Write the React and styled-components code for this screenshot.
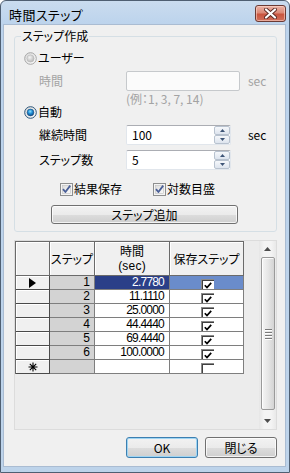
import React from "react";
import styled, { createGlobalStyle } from "styled-components";

const Global = createGlobalStyle`
  html, body { margin: 0; padding: 0; background: #ffffff; }
  body {
    font-family: "Noto Sans CJK JP", "Noto Sans", sans-serif;
    font-size: 12px;
    color: #000;
    font-feature-settings: "palt";
  }
  * { box-sizing: border-box; }
`;

const Window = styled.div`
  width: 290px;
  height: 473px;
  border: 1px solid #4f5f72;
  border-radius: 6px 6px 0 0;
  background: linear-gradient(#cadcef 0px, #bcd3ec 24px, #bdd3ea 100%);
  display: flex;
  flex-direction: column;
  padding: 0 4px 6px 3px;
  overflow: hidden;
`;

const TitleBar = styled.div`
  height: 24px;
  display: flex;
  align-items: flex-start;
  padding-left: 5px;
  margin-right: -1px;
`;

const Title = styled.div`
  font-size: 13px;
  line-height: 13px;
  margin-top: 7px;
  letter-spacing: 0.4px;
`;

const CloseBtn = styled.div`
  margin-left: auto;
  margin-top: 4px;
  width: 31px;
  height: 17px;
  border: 1px solid #6b3a34;
  border-radius: 3px;
  background: linear-gradient(#eab2a5 0%, #dc8a78 45%, #c9553f 55%, #d0705c 100%);
  box-shadow: inset 0 0 0 1px rgba(255, 220, 210, 0.55);
  display: flex;
  align-items: center;
  justify-content: center;
`;

const Client = styled.div`
  flex: 1;
  background: #f0f0f0;
  box-shadow: 0 0 0 1px #aabcd2;
  display: flex;
  flex-direction: column;
  padding: 5px 8px 0 10px;
`;

const Group = styled.fieldset`
  margin: 0;
  padding: 0 0 7px 0;
  border: 1px solid #d5dfe5;
  border-radius: 3px;
  min-width: 0;
  display: flex;
  flex-direction: column;
`;

const Legend = styled.legend`
  margin-left: 6px;
  padding: 0 1px;
  font-size: 12px;
  line-height: 12px;
`;

const Row = styled.div`
  display: flex;
  align-items: center;
  height: ${(p) => p.$h}px;
  margin-top: ${(p) => p.$mt}px;
  padding-left: ${(p) => p.$indent || 0}px;
  gap: ${(p) => p.$gap || 0}px;
`;

const FieldRow = styled.div`
  display: grid;
  grid-template-columns: 87px 122px auto;
  align-items: center;
  height: ${(p) => p.$h}px;
  margin-top: ${(p) => p.$mt}px;
  padding-left: 24px;
`;

const Label = styled.span`
  font-size: 12px;
  line-height: 14px;
  color: ${(p) => (p.$disabled ? "#a3a3a3" : "#000")};
  white-space: nowrap;
`;

const TextBox = styled.div`
  width: 114px;
  height: 20px;
  border: 1px solid #c6c9cc;
  border-radius: 2px;
  background: #fbfbfb;
`;

const SpinBox = styled.div`
  width: 105px;
  height: 20px;
  border: 1px solid #e1e6ec;
  border-top-color: #abadb3;
  border-radius: 2px;
  background: #fff;
  display: flex;
  align-items: center;
  padding-left: 5px;
`;

const SpinValue = styled.span`
  font-size: 12px;
  line-height: 14px;
  flex: 1;
`;

const SpinButtons = styled.div`
  width: 16px;
  height: 18px;
  display: flex;
  flex-direction: column;
`;

const SpinBtn = styled.div`
  flex: 1;
  border: 1px solid #b8c2cf;
  border-radius: 2px;
  background: linear-gradient(#f6f8fb, #dde4ee);
  display: flex;
  align-items: center;
  justify-content: center;
`;

const RadioText = styled.span`
  font-size: 12px;
  line-height: 14px;
  margin-left: 1px;
  color: #000;
`;

const CheckItem = styled.div`
  display: flex;
  align-items: center;
  gap: 1px;
`;

const PushButton = styled.div`
  width: ${(p) => p.$w}px;
  height: ${(p) => p.$h}px;
  margin-left: ${(p) => p.$ml || 0}px;
  border: 1px solid ${(p) => (p.$default ? "#3c7fb1" : "#707070")};
  border-radius: 3px;
  background: linear-gradient(#f2f2f2 0%, #ebebeb 50%, #dddddd 51%, #cfcfcf 100%);
  box-shadow: inset 0 0 0 1px ${(p) => (p.$default ? "#9fd5f3" : "rgba(255,255,255,0.75)")};
  display: flex;
  align-items: center;
  justify-content: center;
  font-size: 12px;
  line-height: 14px;
`;

const GridBox = styled.div`
  margin-top: 8px;
  height: 190px;
  border: 1px solid #dcdcdc;
  background: #ececec;
  display: flex;
`;

const Table = styled.div`
  align-self: flex-start;
  display: grid;
  grid-template-columns: 34px 45px 75px 74px;
  grid-template-rows: 34px;
  grid-auto-rows: 14px;
  border-top: 1px solid #6a6a6a;
  border-left: 1px solid #6a6a6a;
  background: #fff;
`;

const HeadCell = styled.div`
  background: #f0f0f0;
  border-right: 1px solid #6a6a6a;
  border-bottom: 1px solid #6a6a6a;
  box-shadow: inset 1px 1px #ffffff;
  display: flex;
  flex-direction: column;
  align-items: center;
  justify-content: center;
  text-align: center;
  font-size: 12px;
  line-height: 13px;
  padding-bottom: 1px;
`;

const HeadMain = styled.span`
  line-height: 15px;
`;

const HeadSub = styled.span`
  font-family: "Liberation Sans", Arial, sans-serif;
  font-size: 12px;
  line-height: 16px;
  letter-spacing: 0.2px;
`;

const RowHead = styled.div`
  background: #f0f0f0;
  border-right: 1px solid #4a4a4a;
  border-bottom: 1px solid #4a4a4a;
  box-shadow: inset 1px 1px #ffffff;
  display: flex;
  align-items: center;
  justify-content: center;
`;

const Cell = styled.div`
  background: ${(p) => p.$bg || "#fff"};
  color: ${(p) => p.$color || "#000"};
  border-right: 1px solid #7e7e7e;
  border-bottom: 1px solid #7e7e7e;
  display: flex;
  align-items: center;
  justify-content: ${(p) => (p.$center ? "center" : "flex-end")};
  padding-right: ${(p) => (p.$center ? 0 : 5)}px;
  font-family: "Liberation Sans", Arial, sans-serif;
  font-size: 12px;
  line-height: 13px;
  letter-spacing: -0.8px;
  overflow: hidden;
`;

const GridCheck = styled.div`
  width: 13px;
  height: 13px;
  margin-top: 3px;
  margin-left: 1px;
  align-self: flex-start;
  background: #fff;
  border-top: 1px solid #8a8a8a;
  border-left: 1px solid #8a8a8a;
  box-shadow: inset 1px 1px #404040;
  display: flex;
  align-items: flex-start;
  justify-content: center;
  padding-top: 2px;
`;

const ScrollBar = styled.div`
  margin-left: auto;
  width: 17px;
  display: flex;
  flex-direction: column;
  background: linear-gradient(90deg, #e6e6e6, #f4f4f4 30%, #f4f4f4 70%, #e9e9e9);
`;

const ScrollArrow = styled.div`
  height: 16px;
  display: flex;
  align-items: center;
  justify-content: center;
`;

const Thumb = styled.div`
  height: 153px;
  margin: 0 1px 0 2px;
  border: 1px solid #9a9a9a;
  border-radius: 2px;
  background: linear-gradient(90deg, #f5f5f5, #e6e6e6 50%, #d4d4d4);
  box-shadow: inset 1px 1px rgba(255, 255, 255, 0.8);
  display: flex;
  align-items: center;
  justify-content: center;
`;

const Grip = styled.div`
  display: flex;
  flex-direction: column;
  gap: 1px;
  margin-top: 2px;
`;

const GripLine = styled.div`
  width: 7px;
  height: 1px;
  background: #7a7a7a;
  box-shadow: 0 1px #ffffff;
  margin-bottom: 1px;
`;

const Spacer = styled.div`
  flex: 1;
`;

const Footer = styled.div`
  display: flex;
  justify-content: flex-end;
  gap: 7px;
  margin-top: 7px;
`;

/* ---------- drawings ---------- */

const CloseX = () => (
  <svg width="13" height="11" viewBox="0 0 13 11">
    <path d="M2 1.5 L11 9.5 M11 1.5 L2 9.5" stroke="#5a2a24" strokeWidth="4" strokeLinecap="round" />
    <path d="M2 1.5 L11 9.5 M11 1.5 L2 9.5" stroke="#ffffff" strokeWidth="2.2" strokeLinecap="round" />
  </svg>
);

const Radio = ({ checked, disabled }) => (
  <svg width="13" height="13" viewBox="0 0 13 13">
    <defs>
      <radialGradient id="rdis" cx="0.4" cy="0.35" r="0.7">
        <stop offset="0" stopColor="#f4f4f4" />
        <stop offset="1" stopColor="#b3b3b3" />
      </radialGradient>
      <radialGradient id="ron" cx="0.45" cy="0.35" r="0.7">
        <stop offset="0" stopColor="#8fe0ff" />
        <stop offset="0.45" stopColor="#1e8fd6" />
        <stop offset="1" stopColor="#0b3d7a" />
      </radialGradient>
      <linearGradient id="rbg" x1="0" y1="0" x2="1" y2="1">
        <stop offset="0" stopColor="#d8d8d8" />
        <stop offset="1" stopColor="#ffffff" />
      </linearGradient>
    </defs>
    <circle cx="6.5" cy="6.5" r="5.8" fill="url(#rbg)" stroke={disabled ? "#a6a6a6" : "#2b5478"} strokeWidth="1" />
    {checked ? (
      <circle cx="6.5" cy="6.5" r="3.4" fill="url(#ron)" stroke="#1d4f80" strokeWidth="0.6" />
    ) : (
      <circle cx="6.5" cy="6.5" r="3.6" fill="url(#rdis)" stroke="#b8b8b8" strokeWidth="0.6" />
    )}
  </svg>
);

const CheckBox = () => (
  <svg width="13" height="13" viewBox="0 0 13 13">
    <defs>
      <linearGradient id="cbg" x1="0" y1="0" x2="1" y2="1">
        <stop offset="0" stopColor="#dcdcdc" />
        <stop offset="1" stopColor="#fbfbfb" />
      </linearGradient>
    </defs>
    <rect x="0.5" y="0.5" width="12" height="12" fill="#f4f4f4" stroke="#8e8f8f" />
    <rect x="2.5" y="2.5" width="8" height="8" fill="url(#cbg)" stroke="#c0c0c0" strokeWidth="0.6" />
    <path d="M3 6.2 L5.4 9 L10.2 2.6" fill="none" stroke="#4a5f97" strokeWidth="1.8" strokeLinejoin="round" />
  </svg>
);

const SmallTick = () => (
  <svg width="8" height="7" viewBox="0 0 8 7">
    <path d="M0.8 3.2 L3 5.6 L7.2 0.9" fill="none" stroke="#000" strokeWidth="1.7" />
  </svg>
);

const Arrow = ({ dir, color = "#4d4d4d", w = 7, h = 4 }) => (
  <svg width={w} height={h} viewBox={`0 0 ${w} ${h}`}>
    <polygon
      points={dir === "up" ? `0,${h} ${w},${h} ${w / 2},0` : `0,0 ${w},0 ${w / 2},${h}`}
      fill={color}
    />
  </svg>
);

const RowPointer = () => (
  <svg width="7" height="10" viewBox="0 0 7 10">
    <polygon points="0,0 7,5 0,10" fill="#000" />
  </svg>
);

const NewRowStar = () => (
  <svg width="10" height="10" viewBox="0 0 10 10">
    <path d="M5 0.5 V9.5 M0.5 5 H9.5 M1.8 1.8 L8.2 8.2 M8.2 1.8 L1.8 8.2" stroke="#000" strokeWidth="1.1" />
  </svg>
);

const rows = [
  { n: 1, t: "2.7780", sel: true },
  { n: 2, t: "11.1110" },
  { n: 3, t: "25.0000" },
  { n: 4, t: "44.4440" },
  { n: 5, t: "69.4440" },
  { n: 6, t: "100.0000" },
];

export default function App() {
  return (
    <>
      <Global />
      <Window>
        <TitleBar>
          <Title>時間ステップ</Title>
          <CloseBtn>
            <CloseX />
          </CloseBtn>
        </TitleBar>
        <Client>
          <Group>
            <Legend>ステップ作成</Legend>
            <Row $h={16} $mt={8} $indent={9}>
              <Radio disabled />
              <RadioText>ユーザー</RadioText>
            </Row>
            <FieldRow $h={20} $mt={5}>
              <Label $disabled>時間</Label>
              <TextBox />
              <Label $disabled>sec</Label>
            </FieldRow>
            <FieldRow $h={12} $mt={1}>
              <span />
              <Label $disabled>(例：1, 3, 7, 14)</Label>
            </FieldRow>
            <Row $h={16} $mt={0} $indent={9}>
              <Radio checked />
              <RadioText>自動</RadioText>
            </Row>
            <FieldRow $h={20} $mt={5}>
              <Label>継続時間</Label>
              <SpinBox>
                <SpinValue>100</SpinValue>
                <SpinButtons>
                  <SpinBtn>
                    <Arrow dir="up" color="#3e5577" w={5} h={3} />
                  </SpinBtn>
                  <SpinBtn>
                    <Arrow dir="down" color="#3e5577" w={5} h={3} />
                  </SpinBtn>
                </SpinButtons>
              </SpinBox>
              <Label>sec</Label>
            </FieldRow>
            <FieldRow $h={20} $mt={5}>
              <Label>ステップ数</Label>
              <SpinBox>
                <SpinValue>5</SpinValue>
                <SpinButtons>
                  <SpinBtn>
                    <Arrow dir="up" color="#3e5577" w={5} h={3} />
                  </SpinBtn>
                  <SpinBtn>
                    <Arrow dir="down" color="#3e5577" w={5} h={3} />
                  </SpinBtn>
                </SpinButtons>
              </SpinBox>
            </FieldRow>
            <Row $h={16} $mt={11} $indent={45} $gap={31}>
              <CheckItem>
                <CheckBox />
                <Label>結果保存</Label>
              </CheckItem>
              <CheckItem>
                <CheckBox />
                <Label>対数目盛</Label>
              </CheckItem>
            </Row>
            <Row $h={19} $mt={8}>
              <PushButton $w={187} $h={19} $ml={36}>
                ステップ追加
              </PushButton>
            </Row>
          </Group>

          <GridBox>
            <Table>
              <HeadCell />
              <HeadCell>ステップ</HeadCell>
              <HeadCell>
                <HeadMain>時間</HeadMain>
                <HeadSub>(sec)</HeadSub>
              </HeadCell>
              <HeadCell>保存ステップ</HeadCell>
              {rows.map((r) => (
                <React.Fragment key={r.n}>
                  <RowHead>{r.sel ? <RowPointer /> : null}</RowHead>
                  <Cell $bg="#d3d3d3">{r.n}</Cell>
                  <Cell $bg={r.sel ? "#2a3f88" : "#fff"} $color={r.sel ? "#fff" : "#000"}>
                    {r.t}
                  </Cell>
                  <Cell $center $bg={r.sel ? "#6a8ccb" : "#fff"}>
                    <GridCheck>
                      <SmallTick />
                    </GridCheck>
                  </Cell>
                </React.Fragment>
              ))}
              <RowHead>
                <NewRowStar />
              </RowHead>
              <Cell $bg="#d3d3d3" />
              <Cell />
              <Cell $center>
                <GridCheck />
              </Cell>
            </Table>
            <ScrollBar>
              <ScrollArrow>
                <Arrow dir="up" />
              </ScrollArrow>
              <Thumb>
                <Grip>
                  <GripLine />
                  <GripLine />
                  <GripLine />
                  <GripLine />
                </Grip>
              </Thumb>
              <Spacer />
              <ScrollArrow>
                <Arrow dir="down" />
              </ScrollArrow>
            </ScrollBar>
          </GridBox>

          <Footer>
            <PushButton $w={72} $h={21} $default>
              OK
            </PushButton>
            <PushButton $w={72} $h={21}>
              閉じる
            </PushButton>
          </Footer>
        </Client>
      </Window>
    </>
  );
}
